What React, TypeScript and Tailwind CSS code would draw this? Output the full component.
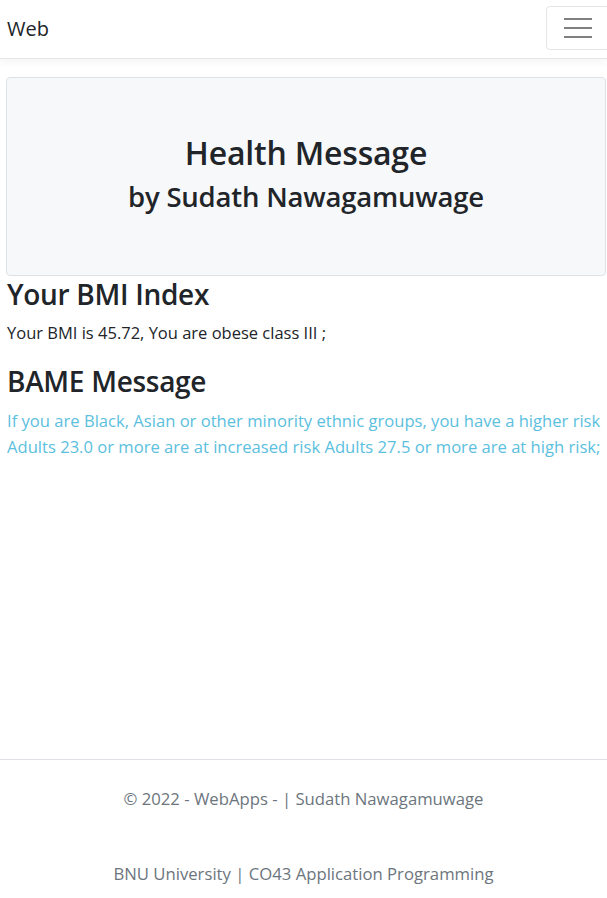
import React from 'react';

const font = { fontFamily: '"Open Sans", "Noto Sans", sans-serif' };

export default function App() {
  return (
    <div className="min-h-[898px] flex flex-col bg-white text-[#212529] overflow-hidden" style={font}>
      <nav className="h-[59px] flex items-center justify-between pl-[7px] border-b border-[#e5e5e5] shadow-[0_4px_8px_rgba(0,0,0,0.04)]">
        <span className="text-[20px] leading-[30px]">Web</span>
        <button className="w-[64px] h-[44px] -mr-[3px] mb-[2px] border border-[rgba(0,0,0,0.1)] rounded-[4px] flex flex-col items-center justify-center gap-[7px]" aria-label="Toggle navigation">
          <span className="block w-[28px] h-[2px] bg-[#808080]" />
          <span className="block w-[28px] h-[2px] bg-[#808080]" />
          <span className="block w-[28px] h-[2px] bg-[#808080]" />
        </button>
      </nav>

      <main className="flex-1 pl-[6px] pr-[1px] pt-[18px]">
        <div className="h-[199px] bg-[#f7f8fa] border border-[#dee2e6] rounded-[4px] flex flex-col items-center justify-center pb-[6px]">
          <h1 className="text-[32px] leading-[40px] font-semibold tracking-[-0.2px]">Health Message</h1>
          <h2 className="text-[27.5px] leading-[36px] font-semibold mt-[6px] tracking-[-0.2px]">by Sudath Nawagamuwage</h2>
        </div>

        <div className="px-[1px]">
          <h2 className="text-[28px] leading-[36px] font-semibold tracking-[-0.3px]">Your BMI Index</h2>
          <p className="text-[16.5px] leading-[24px] mt-[9px]">Your BMI is 45.72, You are obese class III ;</p>
          <h2 className="text-[28px] leading-[36px] font-semibold mt-[18px] tracking-[-0.3px]">BAME Message</h2>
          <p className="text-[16.6px] leading-[26px] text-[#5bc0de] mt-[9px]">
            If you are Black, Asian or other minority ethnic groups, you have a higher risk
            Adults 23.0 or more are at increased risk Adults 27.5 or more are at high risk;
          </p>
        </div>
      </main>

      <footer className="border-t border-[#dee2e6] h-[139px] flex flex-col items-center text-[#6c757d] text-[16.7px]">
        <p className="mt-[27px] leading-[24px]">© 2022 - WebApps - | Sudath Nawagamuwage</p>
        <p className="mt-[51px] leading-[24px]">BNU University | CO43 Application Programming</p>
      </footer>
    </div>
  );
}
